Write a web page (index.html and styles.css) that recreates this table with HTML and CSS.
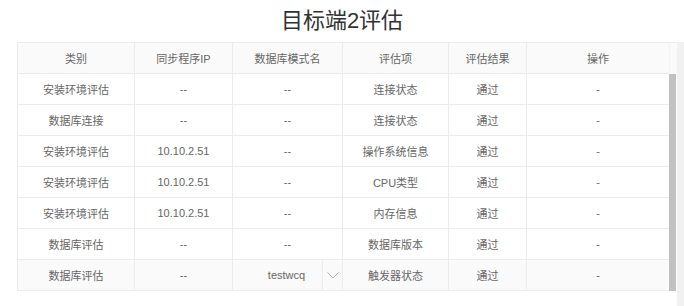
FILE: index.html
```html
<!DOCTYPE html>
<html lang="zh-CN">
<head>
<meta charset="utf-8">
<title>目标端2评估</title>
<link rel="stylesheet" href="styles.css">
</head>
<body>
<div class="page">
  <h1 class="title">目标端2评估</h1>
  <div class="stage">
    <div class="grid-wrap">
      <div class="head">
        <div class="row head-row">
          <div class="cell">类别</div>
          <div class="cell">同步程序IP</div>
          <div class="cell">数据库模式名</div>
          <div class="cell">评估项</div>
          <div class="cell">评估结果</div>
          <div class="cell">操作</div>
        </div>
        <div class="gutter"></div>
      </div>
      <div class="body">
        <div class="rows">
          <div class="row">
            <div class="cell">安装环境评估</div>
            <div class="cell">--</div>
            <div class="cell">--</div>
            <div class="cell">连接状态</div>
            <div class="cell">通过</div>
            <div class="cell">-</div>
          </div>
          <div class="row">
            <div class="cell">数据库连接</div>
            <div class="cell">--</div>
            <div class="cell">--</div>
            <div class="cell">连接状态</div>
            <div class="cell">通过</div>
            <div class="cell">-</div>
          </div>
          <div class="row">
            <div class="cell">安装环境评估</div>
            <div class="cell">10.10.2.51</div>
            <div class="cell">--</div>
            <div class="cell">操作系统信息</div>
            <div class="cell">通过</div>
            <div class="cell">-</div>
          </div>
          <div class="row">
            <div class="cell">安装环境评估</div>
            <div class="cell">10.10.2.51</div>
            <div class="cell">--</div>
            <div class="cell">CPU类型</div>
            <div class="cell">通过</div>
            <div class="cell">-</div>
          </div>
          <div class="row">
            <div class="cell">安装环境评估</div>
            <div class="cell">10.10.2.51</div>
            <div class="cell">--</div>
            <div class="cell">内存信息</div>
            <div class="cell">通过</div>
            <div class="cell">-</div>
          </div>
          <div class="row">
            <div class="cell">数据库评估</div>
            <div class="cell">--</div>
            <div class="cell">--</div>
            <div class="cell">数据库版本</div>
            <div class="cell">通过</div>
            <div class="cell">-</div>
          </div>
          <div class="row hover">
            <div class="cell">数据库评估</div>
            <div class="cell">--</div>
            <div class="cell select">
              <span class="select-value">testwcq</span>
              <span class="select-arrow">
                <svg width="12" height="7" viewBox="0 0 12 7"><polyline points="0.5,0.5 6,6 11.5,0.5" fill="none" stroke="#b0b0b0" stroke-width="1"/></svg>
              </span>
            </div>
            <div class="cell">触发器状态</div>
            <div class="cell">通过</div>
            <div class="cell">-</div>
          </div>
        </div>
        <div class="scrollbar"><div class="thumb"></div></div>
      </div>
    </div>
    <div class="edge"></div>
  </div>
</div>
</body>
</html>
```
FILE: styles.css
```css
html, body {
  margin: 0;
  padding: 0;
  background: #fff;
}
body {
  font-family: "Liberation Sans", "Noto Sans CJK SC", sans-serif;
  color: #666;
}
.page {
  width: 684px;
  height: 306px;
  overflow: hidden;
}
.title {
  margin: 0;
  height: 42px;
  line-height: 42px;
  font-size: 22px;
  font-weight: normal;
  color: #333;
  text-align: center;
}
.stage {
  display: flex;
  padding-left: 17px;
  height: 264px;
}
.grid-wrap {
  width: 660px;
  align-self: flex-start;
}
.head {
  display: flex;
}
.head-row {
  background: #fafafa;
  border-top: 1px solid #ececec;
}
.gutter {
  width: 8px;
  background: #fafafa;
  border-top: 1px solid #ececec;
  border-left: 1px solid #f3f3f3;
  box-sizing: border-box;
}
.body {
  display: flex;
}
.rows {
  display: flex;
  flex-direction: column;
}
.row {
  display: grid;
  grid-template-columns: 117px 98px 110px 106px 78px 142px;
  border-left: 1px solid #ececec;
}
.cell {
  box-sizing: border-box;
  height: 31px;
  border-right: 1px solid #ececec;
  border-bottom: 1px solid #ececec;
  display: flex;
  align-items: center;
  justify-content: center;
  font-size: 11px;
  white-space: nowrap;
}
.row .cell:last-child {
  border-right: none;
}
.hover {
  background: #fafafa;
}
.select {
  justify-content: stretch;
}
.select-value {
  flex: 1;
  padding-left: 18px;
  text-align: center;
}
.select-arrow {
  width: 19px;
  height: 30px;
  border-left: 1px solid #ececec;
  display: flex;
  align-items: center;
  justify-content: center;
}
.scrollbar {
  width: 8px;
  display: flex;
}
.thumb {
  width: 7px;
  background: #c1c1c1;
}
.edge {
  width: 7px;
  background: #f1f1f1;
}
```
